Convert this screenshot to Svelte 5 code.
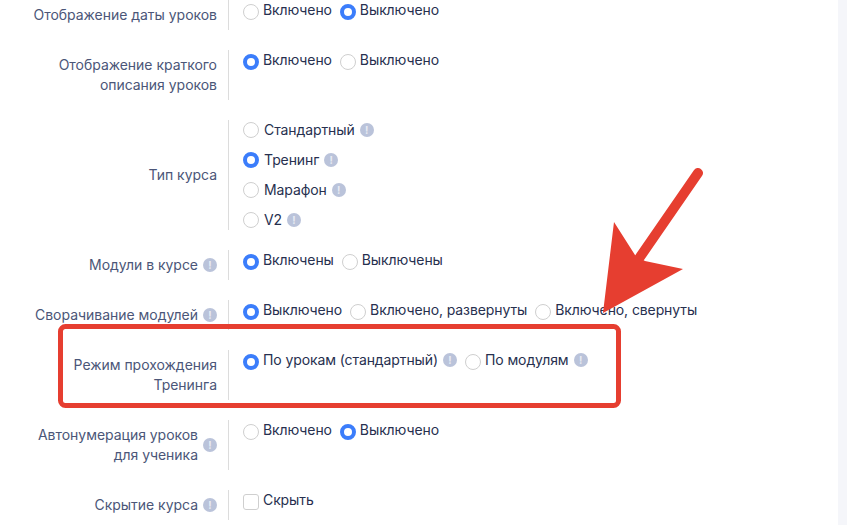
<script>
  const rows = [
    { label: ['Отображение даты уроков'], h: 30, options: [['Включено', false], ['Выключено', true]] },
    { label: ['Отображение краткого', 'описания уроков'], h: 50, options: [['Включено', true], ['Выключено', false]] },
    { label: ['Тип курса'], h: 110, center: true, stacked: true, options: [['Стандартный', false, true], ['Тренинг', true, true], ['Марафон', false, true], ['V2', false, true]] },
    { label: ['Модули в курсе'], info: true, h: 30, options: [['Включены', true], ['Выключены', false]] },
    { label: ['Сворачивание модулей'], info: true, h: 30, options: [['Выключено', true], ['Включено, развернуты', false], ['Включено, свернуты', false]] },
    { label: ['Режим прохождения', 'Тренинга'], h: 50, options: [['По урокам (стандартный)', true, true], ['По модулям', false, true]] },
    { label: ['Автонумерация уроков', 'для ученика'], info: true, h: 50, options: [['Включено', false], ['Выключено', true]] },
    { label: ['Скрытие курса'], info: true, h: 30, check: 'Скрыть', options: [] }
  ];
</script>

{#snippet info()}
  <span class="info">!</span>
{/snippet}

<div class="page">
  <main class="form">
    {#each rows as row}
      <section class="row" style="height:{row.h}px">
        <div class="label" class:center={row.center}>
          <div class="label-text">
            {#each row.label as line}<div>{line}</div>{/each}
          </div>
          {#if row.info}{@render info()}{/if}
        </div>
        <div class="control" class:stacked={row.stacked}>
          {#each row.options as [text, on, hasInfo]}
            <div class="option">
              <span class="radio" class:on></span>
              <span class="text">{text}</span>
              {#if hasInfo}{@render info()}{/if}
            </div>
          {/each}
          {#if row.check}
            <div class="option">
              <span class="check"></span>
              <span class="text">{row.check}</span>
            </div>
          {/if}
        </div>
      </section>
    {/each}
  </main>
  <aside class="scrollbar"></aside>

  <svg class="annotation" width="847" height="525" viewBox="0 0 847 525">
    <rect x="60.5" y="326.5" width="558" height="79" rx="5" fill="none" stroke="#e63e30" stroke-width="5" />
    <line x1="698" y1="173" x2="640" y2="257" stroke="#e63e30" stroke-width="10" stroke-linecap="round" />
    <polygon points="603,313 614,222 635,255 645,261 683,269" fill="#e63e30" />
  </svg>
</div>

<style>
  :global(body) {
    margin: 0;
    background: #fff;
  }
  .page {
    position: relative;
    width: 847px;
    height: 525px;
    overflow: hidden;
    display: flex;
    font-family: Inter, "Noto Sans", sans-serif;
    font-size: 14px;
    line-height: 20px;
  }
  .form {
    flex: 1;
    display: flex;
    flex-direction: column;
    gap: 20px;
  }
  .scrollbar {
    width: 9px;
    background: #f5f6fa;
  }
  .row {
    display: flex;
    flex: none;
  }
  .label {
    width: 217px;
    flex: none;
    padding-top: 5px;
    padding-right: 11px;
    display: flex;
    justify-content: flex-end;
    align-items: center;
    align-self: flex-start;
    gap: 5px;
    color: #4b5678;
    text-align: right;
    letter-spacing: -0.03px;
  }
  .label.center {
    align-self: center;
    padding-top: 0;
  }
  .control {
    border-left: 1px solid #dcdcdc;
    padding-left: 14px;
    display: flex;
    gap: 8px;
    align-items: flex-start;
  }
  .control.stacked {
    flex-direction: column;
    gap: 10px;
  }
  .option {
    display: flex;
    align-items: flex-start;
    height: 20px;
    color: #27304f;
    letter-spacing: -0.1px;
  }
  .radio, .check {
    width: 16px;
    height: 16px;
    box-sizing: border-box;
    border: 1px solid #cfcfcf;
    border-radius: 50%;
    margin-top: 4px;
    margin-right: 4px;
    background: #fff;
    flex: none;
  }
  .stacked .radio {
    margin-top: 2px;
    margin-right: 5px;
  }
  .radio.on {
    border: 4.5px solid #3b7dfb;
  }
  .check {
    border-radius: 3px;
  }
  .info {
    width: 14px;
    height: 14px;
    margin-top: 3px;
    margin-left: 5px;
    border-radius: 50%;
    background: #bac3da;
    color: #e8ebf3;
    font-size: 10px;
    font-weight: 700;
    line-height: 14px;
    text-align: center;
    flex: none;
  }
  .label .info {
    margin: 0;
  }
  .annotation {
    position: absolute;
    left: 0;
    top: 0;
    pointer-events: none;
  }
</style>
